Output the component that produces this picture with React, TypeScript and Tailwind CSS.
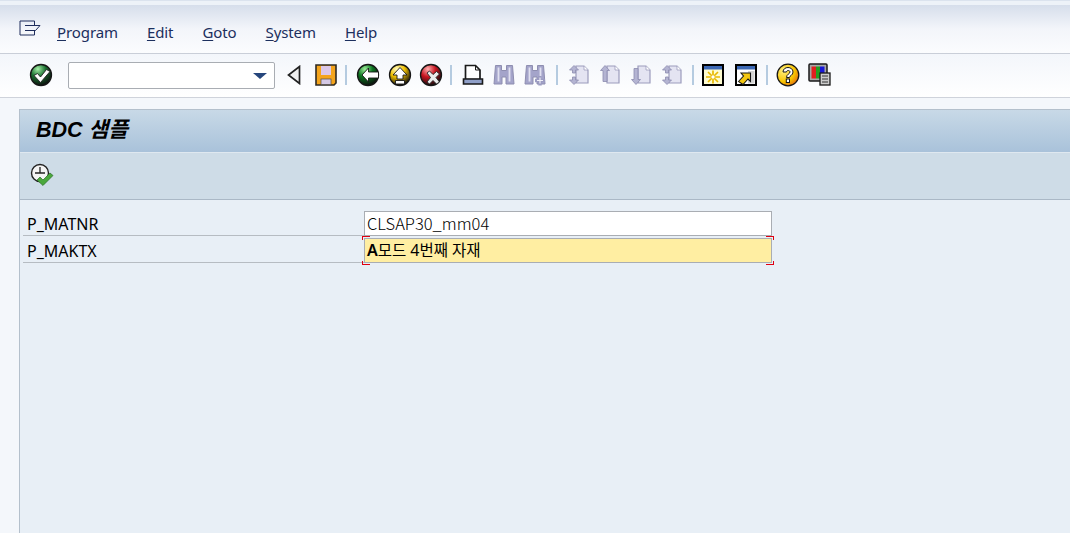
import React from "react";

const Ball = ({ id, from, to, children }: { id: string; from: string; to: string; children: React.ReactNode }) => (
  <svg width="24" height="24" viewBox="0 0 24 24">
    <defs>
      <radialGradient id={id} cx="35%" cy="22%" r="82%">
        <stop offset="0%" stopColor={from} />
        <stop offset="45%" stopColor={to} />
        <stop offset="100%" stopColor="#0c0c0c" />
      </radialGradient>
    </defs>
    <circle cx="12" cy="12" r="10.500" fill={`url(#${id})`} stroke="#161616" strokeWidth="1.300" />
    {children}
  </svg>
);

const CheckIcon = () => (
  <Ball id="okBall" from="#a6f0a8" to="#1a7030">
    <path d="M5 12.500l3.500-2 3 3.500 6-7.500 3.500 2-9.500 11z" fill="#fff" stroke="#222" strokeWidth="0.900" />
  </Ball>
);

const BackIcon = () => (
  <Ball id="backBall" from="#9cf09a" to="#0c7420">
    <path d="M6 12l6.500-7v4h10v6h-10v4z" fill="#fff" stroke="#161616" strokeWidth="0.900" />
  </Ball>
);

const UpIcon = () => (
  <Ball id="upBall" from="#fffbc0" to="#f0c000">
    <path d="M12 4.500l7 7.500h-4v4h-6v-4h-4zM7.500 17.500h9v3.500h-9z" fill="#fff" stroke="#161616" strokeWidth="0.900" />
  </Ball>
);

const CancelIcon = () => (
  <Ball id="xBall" from="#ffb0b0" to="#c81420">
    <path d="M8 10l2.500-2 3.500 3.500 3.500-3 3 2.500-3.500 3.500 3.500 4.500-3 2-3.500-3.500-3.500 3.500-2.500-2 3.500-4.500z" fill="#ececec" stroke="#222" strokeWidth="0.900" />
  </Ball>
);

const SaveIcon = () => (
  <svg width="22" height="22" viewBox="0 0 22 22">
    <path d="M1 1h20v18l-2 2h-18z" fill="#f4a41c" stroke="#2e2a24" strokeWidth="1.600" />
    <rect x="6" y="2" width="10" height="9" fill="#dcc8e8" />
    <rect x="6" y="15" width="10" height="5.500" fill="#d4c8e4" stroke="#4a4a4a" strokeWidth="0.700" />
  </svg>
);

const PrintIcon = () => (
  <svg width="22" height="22" viewBox="0 0 22 22">
    <path d="M3.500 1.500h10l4.500 4.500v9.500h-14.500z" fill="#fff" stroke="#1a1a1a" strokeWidth="1.700" />
    <path d="M13.500 1.500v4.500h4.500" fill="none" stroke="#1a1a1a" strokeWidth="1" />
    <path d="M1.500 15h19v5h-19z" fill="#8f9fc8" stroke="#1a1a1a" strokeWidth="1.600" />
  </svg>
);

const FindIcon = ({ plus }: { plus?: boolean }) => (
  <svg width="22" height="22" viewBox="0 0 22 22">
    <path d="M2.500 1.500h6v5h5v-5h6l1.500 18.500h-8v-7h-4v7h-8z" fill="#a4a4ca" stroke="#8e8eb0" strokeWidth="1" />
    <path d="M5.500 3.500v14M16.500 3.500v14" stroke="#e0e0f0" strokeWidth="1.800" />
    {plus && <path d="M16 12v9.500M11 16.500h10" stroke="#9c9cc2" strokeWidth="3.400" />}
    {plus && <path d="M16 13.500v6M13 16.500h6" stroke="#f0f0f8" strokeWidth="1.100" />}
  </svg>
);

// paging icons: sheet with arrows, disabled look
const PageIcon = ({ kind }: { kind: "first" | "prev" | "next" | "last" }) => (
  <svg width="22" height="22" viewBox="0 0 22 22">
    <path d="M8 2h8l4 4v13h-12z" fill="#e4e4f2" stroke="#9c9cbc" strokeWidth="1.200" />
    <path d="M16 2v4h4" fill="#fff" stroke="#9c9cbc" strokeWidth="0.800" />
    {(kind === "first" || kind === "last") && (
      <>
        <path d="M6 1.500l4.500 4.500h-3v3h-3v-3h-3z" fill="#b4b4d2" stroke="#8c8cae" strokeWidth="0.800" />
        <path d="M6 20.500l4.500-4.500h-3v-3h-3v3h-3z" fill="#b4b4d2" stroke="#8c8cae" strokeWidth="0.800" />
      </>
    )}
    {kind === "prev" && (
      <path d="M6 1.500l4.500 5h-2.500v11h-4v-11h-2.500z" fill="#b4b4d2" stroke="#8c8cae" strokeWidth="0.800" />
    )}
    {kind === "next" && (
      <path d="M6 20.500l4.500-5h-2.500v-11h-4v11h-2.500z" fill="#b4b4d2" stroke="#8c8cae" strokeWidth="0.800" />
    )}
  </svg>
);

const NewSessionIcon = () => (
  <svg width="22" height="22" viewBox="0 0 22 22">
    <rect x="1" y="1" width="20" height="20" fill="#fdfbd0" stroke="#000" strokeWidth="2" />
    <rect x="2" y="2" width="18" height="3.500" fill="#3c68b4" />
    <path d="M11 6.500v13M4 13h14M6 8l10 10M16 8l-10 10" stroke="#e8b800" strokeWidth="1.700" />
    <circle cx="11" cy="13" r="1.700" fill="#fff" />
  </svg>
);

const ShortcutIcon = () => (
  <svg width="22" height="22" viewBox="0 0 22 22">
    <rect x="1" y="1" width="20" height="20" fill="#fff" stroke="#000" strokeWidth="2" />
    <rect x="2" y="2" width="18" height="3.500" fill="#3c68b4" />
    <rect x="13" y="7" width="6.500" height="12.500" fill="#d4d4d4" />
    <path d="M3.500 17.500l5-5.500-2.500-3h9.500v8.500l-2.500-2.500-5 5.500z" fill="#f4c810" stroke="#161616" strokeWidth="1.100" />
  </svg>
);

const HelpIcon = () => (
  <svg width="24" height="24" viewBox="0 0 24 24">
    <defs>
      <radialGradient id="helpBall" cx="30%" cy="30%" r="85%">
        <stop offset="0%" stopColor="#fff080" />
        <stop offset="60%" stopColor="#f8c400" />
        <stop offset="100%" stopColor="#e05c10" />
      </radialGradient>
    </defs>
    <circle cx="12" cy="12" r="10.800" fill="url(#helpBall)" stroke="#161616" strokeWidth="1.300" />
    <path d="M7 9c0-6 10-6 10 0 0 3.500-3.500 3.500-3.500 5.500h-3c0-3.500 3.500-3.500 3.500-5.500 0-2-3.500-2-3.500 0z" fill="#fff" stroke="#161616" strokeWidth="1" />
    <rect x="10.300" y="16" width="3.200" height="3.500" fill="#fff" stroke="#161616" strokeWidth="1" />
  </svg>
);

const LayoutIcon = () => (
  <svg width="23" height="23" viewBox="0 0 23 23">
    <rect x="1" y="1" width="18" height="17" rx="1" fill="#a8a8a8" stroke="#1a1a1a" strokeWidth="1.500" />
    <rect x="3.500" y="3.500" width="4.500" height="12" fill="#e02020" />
    <rect x="8" y="3.500" width="4" height="12" fill="#20a020" />
    <rect x="12" y="3.500" width="4.500" height="9" fill="#1818d8" />
    <rect x="12" y="10" width="10" height="12" fill="#ccc" stroke="#1a1a1a" strokeWidth="1.300" />
    <path d="M14 13h6M14 16h6M14 19h6" stroke="#333" strokeWidth="1" />
  </svg>
);

const Sep = ({ className = "" }: { className?: string }) => (
  <div className={`w-[2px] h-[20px] -mt-[2px] bg-[#b5cbe0] shrink-0 ${className}`} />
);

const Tool = ({ children, className = "" }: { children: React.ReactNode; className?: string }) => (
  <div className={`w-[31px] h-[26px] -mt-[2px] flex items-center justify-center shrink-0 ${className}`}>{children}</div>
);

const MenuItem = ({ first, rest }: { first: string; rest: string }) => (
  <span>
    <span className="underline underline-offset-2 decoration-1">{first}</span>
    {rest}
  </span>
);

const Corner = ({ className }: { className: string }) => (
  <div className={`absolute w-[8px] h-[4px] border-[#e00010] ${className}`} />
);

export default function App() {
  return (
    <div className="w-[1070px] h-[533px] overflow-hidden flex flex-col bg-[#f4f7fb] font-['Noto_Sans','Noto_Sans_CJK_KR',sans-serif] text-black">
      {/* window top strip */}
      <div className="h-[5px] bg-[#edf2f8] border-t border-[#dbe3ee] shrink-0" />
      {/* menu bar */}
      <div className="h-[49px] shrink-0 flex items-start pl-[19px] pt-[15px] bg-gradient-to-b from-[#d6deeb] via-[#f3f5fa] to-[#fbfcfe] border-b border-[#c9ced8]">
        <svg width="22" height="17" viewBox="0 0 22 17" className="shrink-0">
          <path d="M15.500 5.500v-4.500h-14.500v14h14.500v-5" fill="none" stroke="#1f2d5c" strokeWidth="1" />
          <path d="M6 5.500h15l-4.500 5h-10.500" fill="none" stroke="#1f2d5c" strokeWidth="1" />
        </svg>
        <div className="ml-[16px] mt-[1px] flex gap-[29px] text-[15px] leading-[22px] tracking-[-0.1px] text-[#1c2f5e]">
          <MenuItem first="P" rest="rogram" />
          <MenuItem first="E" rest="dit" />
          <MenuItem first="G" rest="oto" />
          <MenuItem first="S" rest="ystem" />
          <MenuItem first="H" rest="elp" />
        </div>
      </div>
      {/* system toolbar */}
      <div className="h-[44px] shrink-0 flex items-center pl-[25px] bg-gradient-to-b from-[#f3f6fb] to-white border-b border-[#cfd3db]">
        <Tool><CheckIcon /></Tool>
        <div className="ml-[12px] w-[207px] h-[27px] shrink-0 flex items-center justify-end pr-[7px] bg-white border border-[#a9adb3] rounded-[2px]">
          <div className="w-0 h-0 border-l-[7px] border-r-[7px] border-t-[6px] border-l-transparent border-r-transparent border-t-[#26467c]" />
        </div>
        <svg width="14" height="20" viewBox="0 0 14 20" className="ml-[12px] -mt-[2px] shrink-0">
          <path d="M12.500 1.500v17l-11-8.500z" fill="#f0f0f0" stroke="#222" strokeWidth="1.700" />
        </svg>
        <Tool className="ml-[9px]"><SaveIcon /></Tool>
        <Sep className="ml-[4px]" />
        <Tool className="ml-[5px]"><BackIcon /></Tool>
        <Tool className="ml-[1px]"><UpIcon /></Tool>
        <Tool><CancelIcon /></Tool>
        <Sep className="ml-[4px]" />
        <Tool className="ml-[5px]"><PrintIcon /></Tool>
        <Tool><FindIcon /></Tool>
        <Tool><FindIcon plus /></Tool>
        <Sep className="ml-[6px]" />
        <Tool className="ml-[5px]"><PageIcon kind="first" /></Tool>
        <Tool><PageIcon kind="prev" /></Tool>
        <Tool><PageIcon kind="next" /></Tool>
        <Tool><PageIcon kind="last" /></Tool>
        <Sep className="ml-[5px]" />
        <Tool className="ml-[3px]"><NewSessionIcon /></Tool>
        <Tool className="ml-[2px]"><ShortcutIcon /></Tool>
        <Sep className="ml-[5px]" />
        <Tool className="ml-[4px]"><HelpIcon /></Tool>
        <Tool className="ml-[1px]"><LayoutIcon /></Tool>
      </div>
      {/* work area */}
      <div className="flex-1 min-h-0 pl-[19px] pt-[11px] bg-[#f4f7fb]">
        <div className="h-full flex flex-col border-l border-t border-[#b4c0cc] bg-[#e8eff6]">
          <div className="h-[43px] shrink-0 flex items-center pl-[16px] pb-[1px] bg-gradient-to-b from-[#c8d9e7] to-[#a9c2da] border-b border-[#dfe8f0] font-['Liberation_Sans','Noto_Sans_CJK_KR',sans-serif] text-[21.5px] font-bold italic">
            BDC 샘플
          </div>
          <div className="h-[47px] shrink-0 flex items-center pl-[10px] pb-[2px] bg-[#cedce7] border-b border-[#aab8c6]">
            <svg width="24" height="24" viewBox="0 0 24 24">
              <circle cx="10" cy="10" r="8.500" fill="#f4f4f4" stroke="#222" strokeWidth="1.400" />
              <path d="M10 4v6M5 10h10" stroke="#222" strokeWidth="1.300" />
              <path d="M7 17l3-3 3 3 7-7 3 2.500-10 10z" fill="#4aa83c" stroke="#2a6a28" strokeWidth="0.700" />
            </svg>
          </div>
          <div className="pt-[11px] pl-[3px] flex flex-col gap-[2px] text-[16px]">
            <div className="flex h-[25px]">
              <div className="w-[341px] pl-[4px] border-b border-[#b6bcc2] leading-[26px]">P_MATNR</div>
              <div className="w-[408px] h-[25px] pl-[2px] bg-white border border-[#a9adb3] font-['Noto_Sans_CJK_KR',sans-serif] font-light leading-[22px] text-[16.5px]">
                CLSAP30_mm04
              </div>
            </div>
            <div className="flex h-[25px]">
              <div className="w-[341px] pl-[4px] border-b border-[#b6bcc2] leading-[26px]">P_MAKTX</div>
              <div className="relative w-[408px] h-[25px] pl-[2px] bg-[#ffeea2] border border-[#a9adb3] leading-[23px] text-[15.5px]">
                <span className="font-semibold text-[16px]">A</span>모드 <span className="text-[16px]">4</span>번째 자재
                <Corner className="-left-[3px] -top-[3px] border-l border-t" />
                <Corner className="-right-[3px] -top-[3px] border-r border-t" />
                <Corner className="-left-[3px] -bottom-[3px] border-l border-b" />
                <Corner className="-right-[3px] -bottom-[3px] border-r border-b" />
              </div>
            </div>
          </div>
        </div>
      </div>
    </div>
  );
}
